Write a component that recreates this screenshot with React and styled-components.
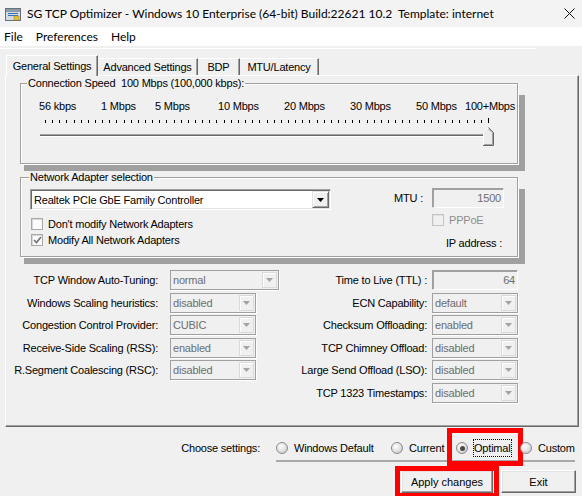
import React from 'react';
import styled, { createGlobalStyle } from 'styled-components';

const GlobalStyle = createGlobalStyle`
    html, body {
        margin: 0;
        padding: 0;
        background: #f0f0f0;
    }
    body {
        font-family: "Liberation Sans", Arial, sans-serif;
        font-size: 11px;
        letter-spacing: -0.2px;
        color: #000;
    }
    * {
        box-sizing: border-box;
    }
`;

const Window = styled.div`
    width: 582px;
    height: 496px;
    overflow: hidden;
    background: #f0f0f0;
    display: flex;
    flex-direction: column;
`;

const TitleBar = styled.div`
    height: 27px;
    flex: none;
    display: flex;
    align-items: center;
    padding-left: 5px;
    background: #f3f3f3;
    font-family: Lato, "Noto Sans", sans-serif;
    font-size: 12px;
    letter-spacing: 0;
`;

const TitleText = styled.span`
    flex: 1;
    margin-left: 6px;
    white-space: pre;
`;

const CloseButton = styled.div`
    width: 22px;
    height: 27px;
    margin-right: 2px;
    display: flex;
    align-items: center;
    justify-content: center;
`;

const MenuBar = styled.div`
    height: 19px;
    flex: none;
    display: flex;
    align-items: center;
    gap: 13px;
    padding-left: 4px;
    background: #fff;
    font-family: Lato, "Noto Sans", sans-serif;
    font-size: 12px;
    letter-spacing: 0;
`;

const MenuItem = styled.span``;

const MenuRule = styled.div`
    width: 536px;
    height: 1px;
    margin-top: 2px;
    background: #fff;
`;

const TabRow = styled.div`
    position: relative;
    z-index: 1;
    display: flex;
    align-items: flex-end;
    margin-top: 6px;
    margin-bottom: -1px;
    padding-left: 6px;
`;

const Tab = styled.div`
    width: ${({ $w }) => $w}px;
    height: ${({ $active }) => ($active ? '21px' : '17px')};
    margin-bottom: ${({ $active }) => ($active ? '0' : '1px')};
    display: flex;
    align-items: center;
    justify-content: center;
    background: #f0f0f0;
    border-top: 1px solid #fff;
    border-left: ${({ $active }) => ($active ? '1px solid #fff' : '0')};
    border-right: 1px solid #696969;
    box-shadow: inset -1px 0 0 #a0a0a0;
    white-space: nowrap;
`;

const Panel = styled.div`
    isolation: isolate;
    margin-left: 5px;
    width: 574px;
    height: 352px;
    padding-top: 7px;
    border: 1px solid;
    border-color: #fff #696969 #696969 #fff;
    box-shadow: inset -1px -1px 0 #a0a0a0;
`;

const GroupBox = styled.div`
    position: relative;
    width: 498px;
    height: ${({ $h }) => $h}px;
    margin: ${({ $top }) => $top}px 0 0 14px;
    border: 1px solid #a0a0a0;
    background: #f0f0f0;
    box-shadow: 1px 1px 0 #fff, inset 1px 1px 0 #fff;

    &::before {
        content: '';
        position: absolute;
        left: 3px;
        top: 11px;
        right: -8px;
        bottom: -8px;
        background: #a0a0a0;
        z-index: -1;
    }
`;

const Legend = styled.span`
    position: absolute;
    top: -7px;
    left: ${({ $left }) => $left}px;
    padding: 0 1px;
    line-height: 13px;
    background: #f0f0f0;
    white-space: pre;
`;

const SpeedScale = styled.div`
    display: grid;
    grid-template-columns: 62px 54px 63px 66px 66px 66px 49px auto;
    margin-top: 16px;
    padding-left: 18px;
    line-height: 13px;
    white-space: nowrap;
`;

const SliderArt = styled.svg`
    display: block;
`;

const AdapterBody = styled.div`
    display: flex;
    justify-content: space-between;
    padding: 10px 13px 0 9px;
`;

const AdapterLeft = styled.div`
    display: flex;
    flex-direction: column;
    padding-top: 1px;
`;

const AdapterRight = styled.div`
    display: flex;
    flex-direction: column;
    align-items: flex-end;
`;

const Dropdown = styled.div`
    width: 301px;
    height: 21px;
    display: flex;
    align-items: center;
    justify-content: space-between;
    padding: 0 1px 0 3px;
    background: #fff;
    border: 1px solid;
    border-color: #a0a0a0 #fff #fff #a0a0a0;
    box-shadow: inset 1px 1px 0 #696969, inset -1px -1px 0 #e3e3e3;
    margin-bottom: 6px;
`;

const DropButton = styled.div`
    width: 17px;
    height: 17px;
    display: flex;
    align-items: center;
    justify-content: center;
    background: #f0f0f0;
    border: 1px solid;
    border-color: #e3e3e3 #696969 #696969 #e3e3e3;
    box-shadow: inset 1px 1px 0 #fff, inset -1px -1px 0 #a0a0a0;
`;

const CheckRow = styled.label`
    height: 16px;
    display: flex;
    align-items: center;
    gap: 5px;
    padding-left: 1px;
    color: ${({ $disabled }) => ($disabled ? '#8d8d8d' : '#000')};
    white-space: nowrap;
`;

const CheckBox = styled.span`
    width: 12px;
    height: 12px;
    flex: none;
    display: flex;
    align-items: center;
    justify-content: center;
    border: 1px solid ${({ $disabled }) => ($disabled ? '#c4c4c4' : '#a8a8a8')};
    background: ${({ $disabled }) => ($disabled ? '#f0f0f0' : '#fbfbfb')};
    box-shadow: inset 1px 1px 0 ${({ $disabled }) => ($disabled ? '#e2e2e2' : '#d8d8d8')};
`;

const FieldRow = styled.div`
    display: flex;
    align-items: center;
    gap: 9px;
`;

const TextField = styled.div`
    width: ${({ $w }) => $w}px;
    height: 20px;
    padding: 0 2px;
    display: flex;
    align-items: center;
    justify-content: flex-end;
    color: #6d6d6d;
    background: #f0f0f0;
    border: 1px solid;
    border-color: #a0a0a0 #fff #fff #a0a0a0;
    box-shadow: inset 1px 1px 0 #a0a0a0;
`;

const PppoeRow = styled(CheckRow)`
    width: 72px;
    margin-top: 4px;
    padding-left: 0;
`;

const IpLabel = styled.div`
    margin-top: 9px;
    padding-right: 2px;
    line-height: 13px;
`;

const Options = styled.div`
    display: flex;
    gap: 9px;
    margin-top: 13px;
`;

const OptionGrid = styled.div`
    display: grid;
    grid-template-columns: ${({ $label }) => $label}px auto;
    column-gap: ${({ $gap }) => $gap}px;
    grid-auto-rows: 20px;
    row-gap: 2.6px;
    align-items: center;
`;

const OptionLabel = styled.div`
    text-align: right;
    white-space: nowrap;
`;

const Combo = styled.div`
    width: ${({ $w }) => $w}px;
    height: 20px;
    display: flex;
    align-items: center;
    justify-content: space-between;
    padding: 0 1px 0 2px;
    color: #6d6d6d;
    background: #f0f0f0;
    border: 1px solid #a0a0a0;
    box-shadow: 1px 1px 0 #fff;
`;

const ComboButton = styled.div`
    width: 15px;
    height: 16px;
    display: flex;
    align-items: center;
    justify-content: center;
    border: 1px solid #dadada;
    box-shadow: inset 1px 1px 0 #fff;
`;

const ChooseRow = styled.div`
    display: flex;
    justify-content: flex-end;
    align-items: flex-start;
    gap: 16px;
    padding: 12px 7px 0 0;
`;

const ChooseLabel = styled.span`
    line-height: 18px;
`;

const RadioGroup = styled.div`
    width: 299px;
    display: grid;
    grid-template-columns: 115px 65px 64px auto;
    align-items: center;
    padding-bottom: 3px;
    border-bottom: 2px solid #a9a9a9;
`;

const RadioItem = styled.label`
    position: relative;
    justify-self: start;
    height: 18px;
    display: flex;
    align-items: center;
    gap: 5px;
    white-space: nowrap;

    &::after {
        content: '';
        display: ${({ $marked }) => ($marked ? 'block' : 'none')};
        position: absolute;
        top: -11px;
        bottom: -9px;
        left: -9px;
        right: -11px;
        border: 5px solid #f00;
    }
`;

const RadioDot = styled.span`
    width: 12px;
    height: 12px;
    flex: none;
    border-radius: 50%;
    border: 1px solid #8a8a8a;
    background: radial-gradient(circle at 38% 35%, #fdfdfd 0, #e6e6e6 45%, #bdbdbd 100%);
    display: flex;
    align-items: center;
    justify-content: center;

    &::after {
        content: '';
        display: ${({ $on }) => ($on ? 'block' : 'none')};
        width: 5px;
        height: 5px;
        border-radius: 50%;
        background: #4a4a4a;
    }
`;

const FocusText = styled.span`
    height: 18px;
    display: flex;
    align-items: center;
    padding: 0 1px;
    outline: ${({ $focus }) => ($focus ? '1px dotted #000' : 'none')};
    outline-offset: -1px;
`;

const ButtonRow = styled.div`
    display: flex;
    justify-content: flex-end;
    gap: 8px;
    margin-top: 8px;
    padding-right: 6px;
`;

const Button = styled.button`
    position: relative;
    width: ${({ $w }) => $w}px;
    height: 23px;
    padding: 0;
    font: inherit;
    color: #000;
    background: #f0f0f0;
    border: 1px solid;
    border-color: #fff #696969 #696969 #fff;
    box-shadow: inset -1px -1px 0 #a0a0a0, inset 1px 1px 0 #e3e3e3;

    &::after {
        content: '';
        display: ${({ $marked }) => ($marked ? 'block' : 'none')};
        position: absolute;
        top: -5px;
        bottom: -6px;
        left: -7px;
        right: -7px;
        border: 5px solid #f00;
    }
`;

const SPEEDS = ['56 kbps', '1 Mbps', '5 Mbps', '10 Mbps', '20 Mbps', '30 Mbps', '50 Mbps', '100+Mbps'];

const TICKS = Array.from({ length: 63 }, (_, i) => Math.round(24 + (i * 443) / 62));

const LEFT_OPTIONS = [
    ['TCP Window Auto-Tuning:', 'normal', 109],
    ['Windows Scaling heuristics:', 'disabled', 86],
    ['Congestion Control Provider:', 'CUBIC', 86],
    ['Receive-Side Scaling (RSS):', 'enabled', 86],
    ['R.Segment Coalescing (RSC):', 'disabled', 86],
];

const RIGHT_OPTIONS = [
    ['ECN Capability:', 'default'],
    ['Checksum Offloading:', 'enabled'],
    ['TCP Chimney Offload:', 'disabled'],
    ['Large Send Offload (LSO):', 'disabled'],
    ['TCP 1323 Timestamps:', 'disabled'],
];

const AppIcon = () => (
    <svg width="16" height="14" viewBox="0 0 16 14">
        <rect x="0.5" y="1.5" width="15" height="12" fill="#d5dbe2" stroke="#66717e" />
        <rect x="1" y="2" width="14" height="3" fill="#8f9aa7" />
        <rect x="3" y="6" width="10" height="1" fill="#2f6fc0" />
        <rect x="3" y="8" width="10" height="1" fill="#2f6fc0" />
        <rect x="9" y="9" width="5" height="4" fill="#e7c23e" stroke="#a88a1c" strokeWidth="0.6" />
    </svg>
);

const CloseIcon = () => (
    <svg width="11" height="11" viewBox="0 0 11 11">
        <path d="M0.5 0.5 L10.5 10.5 M10.5 0.5 L0.5 10.5" stroke="#111" strokeWidth="1" />
    </svg>
);

const DownArrow = ({ color = '#000' }) => (
    <svg width="7" height="4" viewBox="0 0 7 4">
        <path d="M0 0 H7 L3.5 4 Z" fill={color} />
    </svg>
);

const CheckMark = () => (
    <svg width="9" height="8" viewBox="0 0 9 8">
        <path d="M1 4 L3.5 6.5 L8 1" fill="none" stroke="#6f6f6f" strokeWidth="1.6" />
    </svg>
);

const Slider = () => (
    <SliderArt width="496" height="34" viewBox="0 0 496 34">
        {TICKS.map((x, i) => (
            <rect
                key={i}
                x={x}
                y={i === TICKS.length - 1 ? 5 : 7}
                width="1"
                height={i === TICKS.length - 1 ? 5 : 3}
                fill="#000"
            />
        ))}
        <rect x="19" y="21" width="444" height="1" fill="#a0a0a0" />
        <rect x="19" y="22" width="444" height="1" fill="#696969" />
        <rect x="19" y="23" width="444" height="1" fill="#fff" />
        <polygon points="462,19 467,14 472,19 472,32 462,32" fill="#ececec" />
        <polyline points="462.5,32 462.5,19.5 467,15" fill="none" stroke="#fff" />
        <polyline points="467.5,14.5 472.5,19.5 472.5,32.5 462,32.5" fill="none" stroke="#696969" />
        <polyline points="467.5,15.8 471.5,19.8 471.5,31.5 463,31.5" fill="none" stroke="#a0a0a0" />
    </SliderArt>
);

const App = () => {
    return (
        <Window>
            <GlobalStyle />
            <TitleBar>
                <AppIcon />
                <TitleText>SG TCP Optimizer - Windows 10 Enterprise (64-bit) Build:22621 10.2  Template: internet</TitleText>
                <CloseButton>
                    <CloseIcon />
                </CloseButton>
            </TitleBar>

            <MenuBar>
                <MenuItem>File</MenuItem>
                <MenuItem>Preferences</MenuItem>
                <MenuItem>Help</MenuItem>
            </MenuBar>
            <MenuRule />

            <TabRow>
                <Tab $active $w={92}>General Settings</Tab>
                <Tab $w={100}>Advanced Settings</Tab>
                <Tab $w={42}>BDP</Tab>
                <Tab $w={79}>MTU/Latency</Tab>
            </TabRow>

            <Panel>
                <GroupBox $h={81} $top={0}>
                    <Legend $left={6}>Connection Speed  100 Mbps (100,000 kbps):</Legend>
                    <SpeedScale>
                        {SPEEDS.map((s) => (
                            <span key={s}>{s}</span>
                        ))}
                    </SpeedScale>
                    <Slider />
                </GroupBox>

                <GroupBox $h={80} $top={13}>
                    <Legend $left={8}>Network Adapter selection</Legend>
                    <AdapterBody>
                        <AdapterLeft>
                            <Dropdown>
                                <span>Realtek PCIe GbE Family Controller</span>
                                <DropButton>
                                    <DownArrow />
                                </DropButton>
                            </Dropdown>
                            <CheckRow>
                                <CheckBox />
                                Don't modify Network Adapters
                            </CheckRow>
                            <CheckRow>
                                <CheckBox>
                                    <CheckMark />
                                </CheckBox>
                                Modify All Network Adapters
                            </CheckRow>
                        </AdapterLeft>
                        <AdapterRight>
                            <FieldRow>
                                <span>MTU :</span>
                                <TextField $w={72}>1500</TextField>
                            </FieldRow>
                            <PppoeRow $disabled>
                                <CheckBox $disabled />
                                PPPoE
                            </PppoeRow>
                            <IpLabel>IP address :</IpLabel>
                        </AdapterRight>
                    </AdapterBody>
                </GroupBox>

                <Options>
                    <OptionGrid $label={152} $gap={12}>
                        {LEFT_OPTIONS.map(([label, value, w]) => (
                            <React.Fragment key={label}>
                                <OptionLabel>{label}</OptionLabel>
                                <Combo $w={w}>
                                    <span>{value}</span>
                                    <ComboButton>
                                        <DownArrow color="#a3a3a3" />
                                    </ComboButton>
                                </Combo>
                            </React.Fragment>
                        ))}
                    </OptionGrid>
                    <OptionGrid $label={139} $gap={5}>
                        <OptionLabel>Time to Live (TTL) :</OptionLabel>
                        <TextField $w={86}>64</TextField>
                        {RIGHT_OPTIONS.map(([label, value]) => (
                            <React.Fragment key={label}>
                                <OptionLabel>{label}</OptionLabel>
                                <Combo $w={86}>
                                    <span>{value}</span>
                                    <ComboButton>
                                        <DownArrow color="#a3a3a3" />
                                    </ComboButton>
                                </Combo>
                            </React.Fragment>
                        ))}
                    </OptionGrid>
                </Options>
            </Panel>

            <ChooseRow>
                <ChooseLabel>Choose settings:</ChooseLabel>
                <RadioGroup>
                    <RadioItem>
                        <RadioDot />
                        <FocusText>Windows Default</FocusText>
                    </RadioItem>
                    <RadioItem>
                        <RadioDot />
                        <FocusText>Current</FocusText>
                    </RadioItem>
                    <RadioItem $marked>
                        <RadioDot $on />
                        <FocusText $focus>Optimal</FocusText>
                    </RadioItem>
                    <RadioItem>
                        <RadioDot />
                        <FocusText>Custom</FocusText>
                    </RadioItem>
                </RadioGroup>
            </ChooseRow>

            <ButtonRow>
                <Button $w={92} $marked>Apply changes</Button>
                <Button $w={75}>Exit</Button>
            </ButtonRow>
        </Window>
    );
};

export default App;
